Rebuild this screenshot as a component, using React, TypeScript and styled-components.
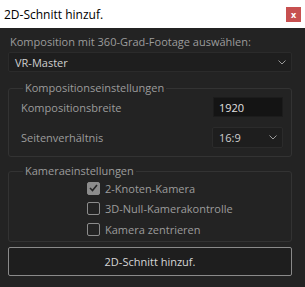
import React from 'react';
import styled, { createGlobalStyle } from 'styled-components';

const GlobalStyle = createGlobalStyle`
  html, body {
    margin: 0;
    padding: 0;
    background: #232323;
  }
  * {
    box-sizing: border-box;
  }
`;

const FONT = `"Open Sans", "Noto Sans", sans-serif`;

const Window = styled.div`
  width: 305px;
  height: 287px;
  background: #232323;
  font-family: ${FONT};
  display: flex;
  flex-direction: column;
`;

const TitleBar = styled.div`
  height: 28px;
  background: #ffffff;
  display: flex;
  align-items: center;
  justify-content: space-between;
  padding: 0 4px 0 4px;
`;

const Title = styled.span`
  font-size: 12px;
  color: #000000;
`;

const CloseButton = styled.div`
  width: 15px;
  height: 15px;
  background: #c75050;
  color: #ffffff;
  font-size: 9px;
  font-weight: 700;
  display: flex;
  align-items: center;
  justify-content: center;
  line-height: 1;
`;

const Body = styled.div`
  flex: 1;
  padding: 7px 13px 0 8px;
  display: flex;
  flex-direction: column;
`;

const TopLabel = styled.div`
  font-size: 11px;
  line-height: 14px;
  color: #9c9c9c;
  padding-left: 2px;
`;

const Select = styled.div<{ $width?: number }>`
  height: ${p => (p.$width ? 21 : 20)}px;
  width: ${p => (p.$width ? `${p.$width}px` : 'auto')};
  margin-top: ${p => (p.$width ? 0 : 3)}px;
  background: #1e1e1e;
  border: 1px solid #2b2b2b;
  border-radius: 2px;
  display: flex;
  align-items: center;
  justify-content: space-between;
  padding: 0 5px 0 6px;
  font-size: 11px;
  color: #cfcfcf;
`;

const Chevron = () => (
  <svg width="8" height="5" viewBox="0 0 8 5">
    <path d="M0.5 0.5 L4 4 L7.5 0.5" fill="none" stroke="#9a9a9a" strokeWidth="1" />
  </svg>
);

const Group = styled.fieldset<{ $gap: number; $top: number; $pt: number; $pb: number }>`
  margin: ${p => p.$top}px 0 0 0;
  padding: ${p => p.$pt}px 8px ${p => p.$pb}px 8px;
  border: 1px solid #333333;
  border-radius: 3px;
  display: flex;
  flex-direction: column;
  gap: ${p => p.$gap}px;
`;

const Legend = styled.legend`
  font-size: 11px;
  line-height: 14px;
  color: #9c9c9c;
  padding: 0 2px;
  margin-left: 6px;
`;

const FieldRow = styled.div`
  display: flex;
  align-items: center;
  justify-content: space-between;
  padding-left: 4px;
`;

const FieldLabel = styled.span`
  font-size: 11px;
  color: #9c9c9c;
`;

const Input = styled.div`
  width: 70px;
  height: 20px;
  background: #141414;
  border: 1px solid #1c1c1c;
  font-size: 11px;
  color: #e0e0e0;
  display: flex;
  align-items: center;
  padding-left: 5px;
`;

const CheckRow = styled.label`
  height: 20px;
  display: flex;
  align-items: center;
  gap: 5px;
  padding-left: 70px;
  font-size: 11px;
  color: #9c9c9c;
`;

const Box = styled.span<{ $checked?: boolean }>`
  width: 13px;
  height: 13px;
  border: 1px solid #8c8c8c;
  border-radius: 2px;
  background: ${p => (p.$checked ? '#8c8c8c' : 'transparent')};
  display: flex;
  align-items: center;
  justify-content: center;
`;

const ActionButton = styled.button`
  margin-top: 5px;
  height: 29px;
  background: #1e1e1e;
  border: 1px solid #8a8a8a;
  border-radius: 2px;
  font-family: ${FONT};
  font-size: 11px;
  color: #d6d6d6;
`;

const Check = ({ checked, label }: { checked?: boolean; label: string }) => (
  <CheckRow>
    <Box $checked={checked}>
      {checked && (
        <svg width="9" height="8" viewBox="0 0 9 8">
          <path d="M1 4 L3.5 6.5 L8 1" fill="none" stroke="#262626" strokeWidth="1.6" />
        </svg>
      )}
    </Box>
    {label}
  </CheckRow>
);

export default function App() {
  return (
    <Window>
      <GlobalStyle />
      <TitleBar>
        <Title>2D-Schnitt hinzuf.</Title>
        <CloseButton>x</CloseButton>
      </TitleBar>
      <Body>
        <TopLabel>Komposition mit 360-Grad-Footage auswählen:</TopLabel>
        <Select>
          VR-Master
          <Chevron />
        </Select>
        <Group $gap={10} $top={9} $pt={2} $pb={8}>
          <Legend>Kompositionseinstellungen</Legend>
          <FieldRow>
            <FieldLabel>Kompositionsbreite</FieldLabel>
            <Input>1920</Input>
          </FieldRow>
          <FieldRow>
            <FieldLabel>Seitenverhältnis</FieldLabel>
            <Select $width={71}>
              16:9
              <Chevron />
            </Select>
          </FieldRow>
        </Group>
        <Group $gap={0.5} $top={7} $pt={0} $pb={2}>
          <Legend>Kameraeinstellungen</Legend>
          <Check checked label="2-Knoten-Kamera" />
          <Check label="3D-Null-Kamerakontrolle" />
          <Check label="Kamera zentrieren" />
        </Group>
        <ActionButton>2D-Schnitt hinzuf.</ActionButton>
      </Body>
    </Window>
  );
}
